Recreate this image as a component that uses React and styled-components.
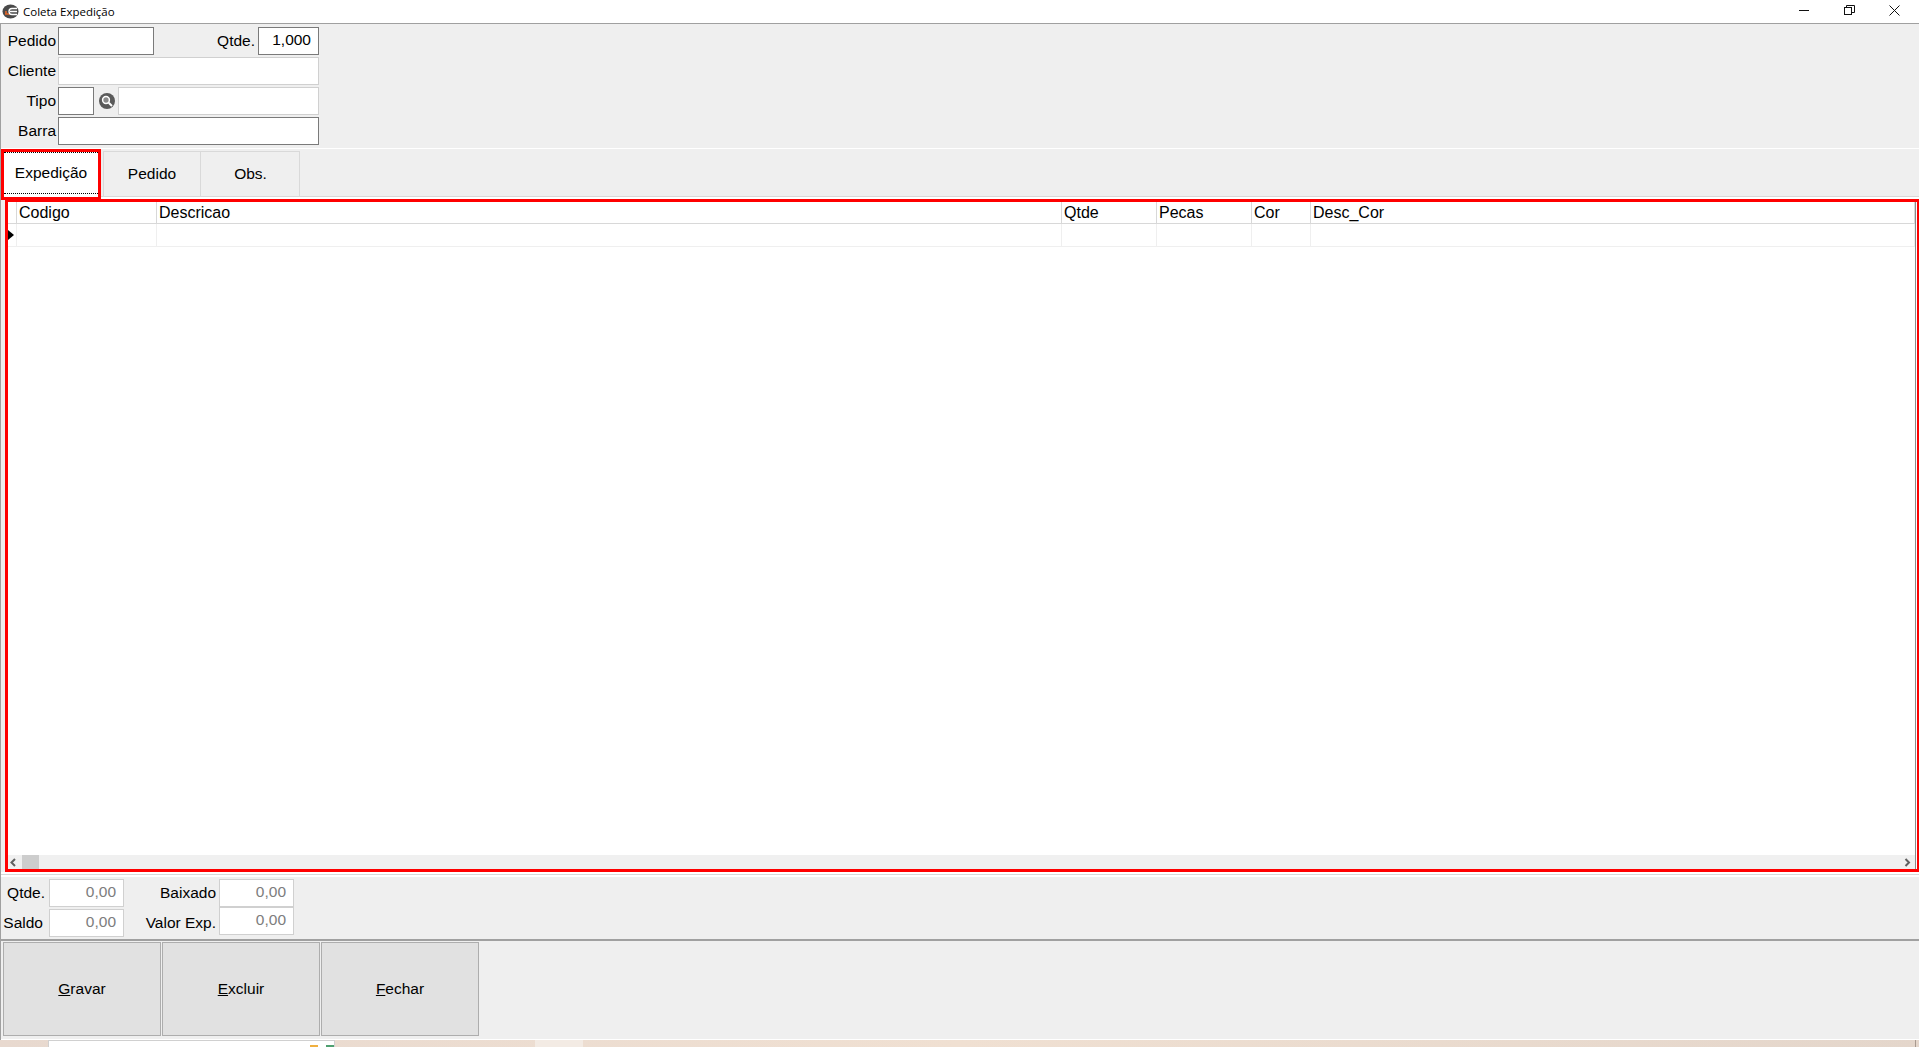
import React from 'react';
import styled, { createGlobalStyle } from 'styled-components';

const GlobalStyle = createGlobalStyle`
  html, body {
    margin: 0;
    padding: 0;
    height: 100%;
    overflow: hidden;
    background: #efefef;
  }
  * {
    box-sizing: border-box;
  }
`;

const Window = styled.div`
  width: 1919px;
  height: 1047px;
  display: flex;
  flex-direction: column;
  background: #efefef;
  font-family: "Liberation Sans", Arial, sans-serif;
  font-size: 15.5px;
  color: #000;
  overflow: hidden;
`;

const TitleBar = styled.div`
  height: 24px;
  flex: none;
  display: flex;
  align-items: center;
  background: #fff;
  border-bottom: 1px solid #a0a0a0;
`;

const AppIcon = styled.svg`
  width: 17px;
  height: 15px;
  margin-left: 2px;
  flex: none;
`;

const TitleText = styled.span`
  margin-left: 4px;
  font-family: "Open Sans", "Noto Sans", sans-serif;
  font-size: 11.5px;
  color: #000;
`;

const WindowButtons = styled.div`
  margin-left: auto;
  margin-right: 2px;
  align-self: flex-start;
  display: flex;
`;

const WindowButton = styled.div`
  width: 45px;
  height: 20px;
  display: flex;
  align-items: center;
  justify-content: center;
`;

const Body = styled.div`
  flex: 1;
  min-height: 0;
  display: flex;
  flex-direction: column;
  border-left: 1px solid #a0a0a0;
`;

const FormPanel = styled.div`
  height: 125px;
  flex: none;
  display: grid;
  grid-template-columns: 56px 262px;
  grid-auto-rows: 28px;
  row-gap: 2px;
  padding-top: 3px;
  border-bottom: 1px solid #fff;
`;

const FieldLabel = styled.label`
  display: flex;
  align-items: center;
  justify-content: flex-end;
  padding-right: 1px;
  height: 28px;
`;

const FieldCell = styled.div`
  display: flex;
  align-items: center;
  margin-left: 1px;
  width: 261px;
`;

const TextBox = styled.div`
  height: 28px;
  width: ${p => (p.$width ? `${p.$width}px` : 'auto')};
  flex: ${p => (p.$width ? 'none' : '1')};
  margin-top: ${p => (p.$raised ? -2 : 0)}px;
  background: #fff;
  border: 1px solid ${p => (p.$soft ? '#d0d0d0' : '#7a7a7a')};
  display: flex;
  align-items: center;
  justify-content: flex-end;
  padding: 0 7px 2px 0;
  color: ${p => (p.$muted ? '#7d7d7d' : '#000')};
`;

const InlineLabel = styled.span`
  margin-left: auto;
  margin-right: 3px;
`;

const SearchButton = styled.svg`
  width: 16px;
  height: 16px;
  margin: 0 3px 0 5px;
  flex: none;
`;

const TabStrip = styled.div`
  height: 48px;
  flex: none;
  display: flex;
  align-items: flex-start;
  border-bottom: 1px solid #d8d8d8;
  box-shadow: 0 2px 0 #fff;
  position: relative;
  z-index: 1;
`;

const ActiveTab = styled.div`
  width: 100px;
  height: 51px;
  flex: none;
  background: #fff;
  border: 3px solid #f00;
  padding-bottom: 3px;
`;

const FocusRing = styled.div`
  height: 100%;
  display: flex;
  align-items: center;
  justify-content: center;
  border-top: 1px dotted #000;
  border-bottom: 1px dotted #000;
`;

const Tab = styled.div`
  width: ${p => p.$width}px;
  height: 46px;
  flex: none;
  margin-left: ${p => p.$gap || 0}px;
  margin-top: 2px;
  padding-left: ${p => p.$shift || 0}px;
  display: flex;
  align-items: center;
  justify-content: center;
  background: #efefef;
  border: 1px solid #d9d9d9;
  border-left-width: ${p => (p.$gap ? 1 : 0)}px;
`;

const GridFrame = styled.div`
  margin: 2px 0 0 4px;
  width: 1915px;
  height: 673px;
  flex: none;
  display: flex;
  flex-direction: column;
  background: #fff;
  border: 3px solid #f00;
  padding-right: 1px;
  font-size: 16px;
`;

const GridInner = styled.div`
  flex: 1;
  min-height: 0;
  display: flex;
  flex-direction: column;
  border-right: 1px solid #8a8a8a;
`;

const GridTable = styled.div`
  flex: 1;
  min-height: 0;
`;

const GridRow = styled.div`
  display: grid;
  grid-template-columns: 9px 140px 905px 95px 95px 59px 1fr;
  height: ${p => p.$height}px;
  border-bottom: 1px solid ${p => (p.$header ? '#d8d8d8' : '#efefef')};
`;

const GridCell = styled.div`
  display: flex;
  align-items: center;
  padding-left: 2px;
  border-right: 1px solid ${p => (p.$header ? '#d8d8d8' : '#efefef')};
  color: #000;
  white-space: nowrap;
`;

const RowMarker = styled.div`
  display: flex;
  align-items: center;
  border-right: 1px solid #efefef;
`;

const Arrow = styled.div`
  width: 0;
  height: 0;
  border-top: 5px solid transparent;
  border-bottom: 5px solid transparent;
  border-left: 6px solid #000;
`;

const ScrollBar = styled.div`
  height: 14px;
  flex: none;
  display: flex;
  align-items: center;
  background: #f0f0f0;
`;

const ScrollThumb = styled.div`
  width: 17px;
  height: 14px;
  background: #cdcdcd;
`;

const ScrollEnd = styled.svg`
  width: 14px;
  height: 14px;
  flex: none;
  margin-left: ${p => (p.$right ? 'auto' : '0')};
`;

const Separator = styled.div`
  height: 5px;
  flex: none;
  background: #d8d8d8;
  border-top: 2px solid #fff;
  border-bottom: 2px solid #fff;
`;

const TotalsPanel = styled.div`
  height: 64px;
  flex: none;
  display: grid;
  grid-template-columns: 48px 75px 95px 75px;
  grid-template-rows: 28px 28px;
  row-gap: 2px;
  padding-top: 2px;
  border-bottom: 2px solid #a0a0a0;
`;

const TotalLabel = styled.label`
  display: flex;
  align-items: center;
  justify-content: flex-end;
  padding-right: ${p => p.$pad || 0}px;
`;

const ButtonBar = styled.div`
  height: 99px;
  flex: none;
  display: flex;
  gap: 1px;
  padding: 1px 0 0 2px;
  border-bottom: 1px solid #fff;
`;

const ActionButton = styled.button`
  width: 158px;
  height: 94px;
  background: #e1e1e1;
  border: 1px solid #adadad;
  font-family: inherit;
  font-size: 15.5px;
  color: #000;
  padding: 0;
  u {
    text-decoration: underline;
  }
`;

const Desktop = styled.div`
  height: 7px;
  flex: none;
  background: linear-gradient(90deg, #e8d9cf 0%, #f0e0d2 50%, #e4d6cb 100%);
  padding-left: 48px;
  display: flex;
  overflow: hidden;
`;

const DesktopWindow = styled.div`
  width: 287px;
  height: 7px;
  flex: none;
  background: #fff;
  border: 1px solid #d0d0d0;
  border-bottom: 0;
  display: flex;
  justify-content: flex-end;
  align-items: flex-end;
  gap: 8px;
`;

const TrayIcon = styled.div`
  width: 8px;
  height: 2px;
  background: ${p => p.$color};
`;

const DesktopPatch = styled.div`
  width: 48px;
  height: 7px;
  flex: none;
  margin-left: 200px;
  background: #f3ebe4;
`;

const DesktopClock = styled.span`
  margin-left: auto;
  margin-right: 3px;
  padding: 6px 69px 0 0;
  font-size: 12px;
  line-height: 12px;
  border-right: 1px solid #a89a90;
`;

const columns = ['Codigo', 'Descricao', 'Qtde', 'Pecas', 'Cor', 'Desc_Cor'];

function App() {
  return (
    <Window>
      <GlobalStyle />
      <TitleBar>
        <AppIcon viewBox="0 0 17 15">
          <ellipse cx="8.5" cy="7.5" rx="8" ry="7" fill="#4a4a4a" />
          <path d="M3 10h5M4 10V7" stroke="#e0662a" strokeWidth="1.6" fill="none" />
          <path d="M15 4.5H10a3 3 0 0 0 0 6h5M8 7.5h7" stroke="#fff" strokeWidth="1.3" fill="none" />
        </AppIcon>
        <TitleText>Coleta Expedição</TitleText>
        <WindowButtons>
          <WindowButton>
            <svg width="11" height="11" viewBox="0 0 11 11"><path d="M0 5.5h10" stroke="#111" /></svg>
          </WindowButton>
          <WindowButton>
            <svg width="11" height="11" viewBox="0 0 11 11" fill="none" stroke="#111">
              <rect x="0.5" y="2.5" width="7" height="7" />
              <path d="M2.5 2.5v-2h8v7h-3" />
            </svg>
          </WindowButton>
          <WindowButton>
            <svg width="11" height="11" viewBox="0 0 11 11"><path d="M.5.5l10 10M10.5.5l-10 10" stroke="#111" /></svg>
          </WindowButton>
        </WindowButtons>
      </TitleBar>
      <Body>
        <FormPanel>
          <FieldLabel>Pedido</FieldLabel>
          <FieldCell>
            <TextBox $width={96} />
            <InlineLabel>Qtde.</InlineLabel>
            <TextBox $width={61}>1,000</TextBox>
          </FieldCell>
          <FieldLabel>Cliente</FieldLabel>
          <FieldCell><TextBox $soft /></FieldCell>
          <FieldLabel>Tipo</FieldLabel>
          <FieldCell>
            <TextBox $width={36} />
            <SearchButton viewBox="0 0 16 16">
              <circle cx="8" cy="8" r="8" fill="#5a5a5a" />
              <circle cx="7" cy="7" r="3.4" fill="#8a8a8a" stroke="#fff" strokeWidth="1.5" />
              <path d="M9.7 9.7l3.3 3.3" stroke="#fff" strokeWidth="2" />
            </SearchButton>
            <TextBox $soft />
          </FieldCell>
          <FieldLabel>Barra</FieldLabel>
          <FieldCell><TextBox /></FieldCell>
        </FormPanel>
        <TabStrip>
          <ActiveTab><FocusRing>Expedição</FocusRing></ActiveTab>
          <Tab $width={98} $gap={2}>Pedido</Tab>
          <Tab $width={99} $shift={1}>Obs.</Tab>
        </TabStrip>
        <GridFrame>
          <GridInner>
            <GridTable>
              <GridRow $header $height={22}>
                <GridCell $header />
                {columns.map(name => <GridCell $header key={name}>{name}</GridCell>)}
              </GridRow>
              <GridRow $height={23}>
                <RowMarker><Arrow /></RowMarker>
                {columns.map(name => <GridCell key={name} />)}
              </GridRow>
            </GridTable>
            <ScrollBar>
              <ScrollEnd viewBox="0 0 14 14">
                <path d="M7 4L3.5 7.5 7 11" fill="none" stroke="#606060" strokeWidth="2" />
              </ScrollEnd>
              <ScrollThumb />
              <ScrollEnd $right viewBox="0 0 14 14">
                <path d="M4.5 4L8 7.5 4.5 11" fill="none" stroke="#606060" strokeWidth="2" />
              </ScrollEnd>
            </ScrollBar>
          </GridInner>
        </GridFrame>
        <Separator />
        <TotalsPanel>
          <TotalLabel $pad={4}>Qtde.</TotalLabel>
          <TextBox $soft $muted>0,00</TextBox>
          <TotalLabel $pad={3}>Baixado</TotalLabel>
          <TextBox $soft $muted>0,00</TextBox>
          <TotalLabel $pad={6}>Saldo</TotalLabel>
          <TextBox $soft $muted>0,00</TextBox>
          <TotalLabel $pad={3}>Valor Exp.</TotalLabel>
          <TextBox $soft $muted $raised>0,00</TextBox>
        </TotalsPanel>
        <ButtonBar>
          <ActionButton><u>G</u>ravar</ActionButton>
          <ActionButton><u>E</u>xcluir</ActionButton>
          <ActionButton><u>F</u>echar</ActionButton>
        </ButtonBar>
      </Body>
      <Desktop>
        <DesktopWindow>
          <TrayIcon $color="#f0b040" />
          <TrayIcon $color="#4fa070" />
        </DesktopWindow>
        <DesktopPatch />
        <DesktopClock>11:21</DesktopClock>
      </Desktop>
    </Window>
  );
}

export default App;
